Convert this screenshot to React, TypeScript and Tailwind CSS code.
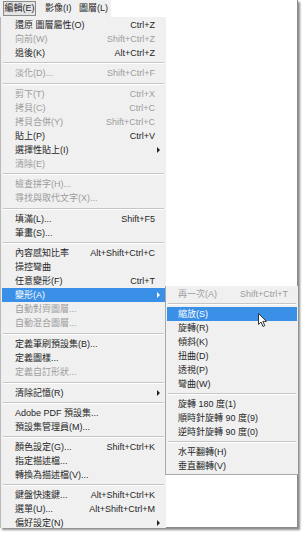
import React from 'react';

type Item =
  | { sep: true; h?: number }
  | { sep?: false; label: string; key?: string; off?: boolean; sub?: boolean; active?: boolean };

const mainMenu: Item[] = [
  { label: '還原 圖層屬性(O)', key: 'Ctrl+Z' },
  { label: '向前(W)', key: 'Shift+Ctrl+Z', off: true },
  { label: '退後(K)', key: 'Alt+Ctrl+Z' },
  { sep: true, h: 6 },
  { label: '淡化(D)...', key: 'Shift+Ctrl+F', off: true },
  { sep: true, h: 7 },
  { label: '剪下(T)', key: 'Ctrl+X', off: true },
  { label: '拷貝(C)', key: 'Ctrl+C', off: true },
  { label: '拷貝合併(Y)', key: 'Shift+Ctrl+C', off: true },
  { label: '貼上(P)', key: 'Ctrl+V' },
  { label: '選擇性貼上(I)', sub: true },
  { label: '清除(E)', off: true },
  { sep: true, h: 6 },
  { label: '檢查拼字(H)...', off: true },
  { label: '尋找與取代文字(X)...', off: true },
  { sep: true, h: 7 },
  { label: '填滿(L)...', key: 'Shift+F5' },
  { label: '筆畫(S)...' },
  { sep: true, h: 6 },
  { label: '內容感知比率', key: 'Alt+Shift+Ctrl+C' },
  { label: '操控彎曲' },
  { label: '任意變形(F)', key: 'Ctrl+T' },
  { label: '變形(A)', sub: true, active: true },
  { label: '自動對齊圖層...', off: true },
  { label: '自動混合圖層...', off: true },
  { sep: true, h: 7 },
  { label: '定義筆刷預設集(B)...' },
  { label: '定義圖樣...' },
  { label: '定義自訂形狀...', off: true },
  { sep: true, h: 7 },
  { label: '清除記憶(R)', sub: true },
  { sep: true, h: 6 },
  { label: 'Adobe PDF 預設集...' },
  { label: '預設集管理員(M)...' },
  { sep: true, h: 6 },
  { label: '顏色設定(G)...', key: 'Shift+Ctrl+K' },
  { label: '指定描述檔...' },
  { label: '轉換為描述檔(V)...' },
  { sep: true, h: 6 },
  { label: '鍵盤快速鍵...', key: 'Alt+Shift+Ctrl+K' },
  { label: '選單(U)...', key: 'Alt+Shift+Ctrl+M' },
  { label: '偏好設定(N)', sub: true },
];

const subMenu: Item[] = [
  { label: '再一次(A)', key: 'Shift+Ctrl+T', off: true },
  { sep: true, h: 6 },
  { label: '縮放(S)', active: true },
  { label: '旋轉(R)' },
  { label: '傾斜(K)' },
  { label: '扭曲(D)' },
  { label: '透視(P)' },
  { label: '彎曲(W)' },
  { sep: true, h: 6 },
  { label: '旋轉 180 度(1)' },
  { label: '順時針旋轉 90 度(9)' },
  { label: '逆時針旋轉 90 度(0)' },
  { sep: true, h: 6 },
  { label: '水平翻轉(H)' },
  { label: '垂直翻轉(V)' },
];

const Arrow = ({ white }: { white?: boolean }) => (
  <svg width="3" height="6" viewBox="0 0 3 6" className="absolute right-[5px] top-[4px]">
    <path d="M0 0 L3 3 L0 6 Z" fill={white ? '#ffffff' : '#222222'} />
  </svg>
);

const MenuList = ({ items, padL, padR }: { items: Item[]; padL: string; padR: string }) => (
  <div className="flex flex-col">
    {items.map((it, i) => {
      if (it.sep) {
        return (
          <div key={i} className="flex flex-col justify-center px-[2px]" style={{ height: it.h }}>
            <div className="border-t border-[#c6c6c6] border-b border-b-white" />
          </div>
        );
      }
      const color = it.active ? 'text-white' : it.off ? 'text-[#9c9c9c]' : 'text-[#262626]';
      return (
        <div
          key={i}
          className={`relative flex h-[14px] items-center justify-between mx-[1px] ${padL} ${padR} ${color} ${it.active ? 'bg-[#3a8fe6]' : ''}`}
        >
          <span className="whitespace-nowrap">{it.label}</span>
          {it.key && <span className="whitespace-nowrap">{it.key}</span>}
          {it.sub && <Arrow white={it.active} />}
        </div>
      );
    })}
  </div>
);

const App: React.FC = () => {
  return (
    <div
      className="w-[304px] h-[533px] bg-white overflow-hidden text-[9px] leading-none"
      style={{ fontFamily: '"Liberation Sans", "Noto Sans CJK TC", sans-serif' }}
    >
      <div className="relative w-[298px] h-[528px] bg-white border-r border-b border-[#8a8a8a] shadow-[2px_2px_2px_rgba(0,0,0,0.45)]">
        {/* menu bar */}
        <div className="flex h-[17px] w-[111px] items-center bg-[#f0f0f0] pl-[3px] text-[#262626] whitespace-nowrap">
          <div className="flex h-[15px] w-[33px] items-center justify-center border border-[#8c8c8c] bg-[#e4e4e4]">編輯(E)</div>
          <div className="ml-[9px] w-[26px]">影像(I)</div>
          <div className="ml-[8px]">圖層(L)</div>
        </div>

        {/* main menu */}
        <div className="w-[166px] h-[511px] bg-[#f0f0f0] border-l border-[#b9b9b9] pt-[1px]">
          <MenuList items={mainMenu} padL="pl-[13px]" padR="pr-[10px]" />
        </div>

        {/* transform submenu */}
        <div className="absolute left-[165px] top-[286px] w-[133px] h-[189px] bg-[#f0f0f0] border-l border-b border-[#a8a8a8] pt-[1px]">
          <MenuList items={subMenu} padL="pl-[11px]" padR="pr-[9px]" />
        </div>

        {/* mouse cursor */}
        <svg width="10" height="15" viewBox="0 0 10 15" className="absolute left-[258px] top-[313px]">
          <path d="M0.5 0.5 L0.5 11.5 L3 9 L5 13.5 L6.8 12.7 L4.9 8.4 L8.5 8.4 Z" fill="#ffffff" stroke="#333333" strokeWidth="1" strokeLinejoin="round" />
        </svg>
      </div>
    </div>
  );
};

export default App;
